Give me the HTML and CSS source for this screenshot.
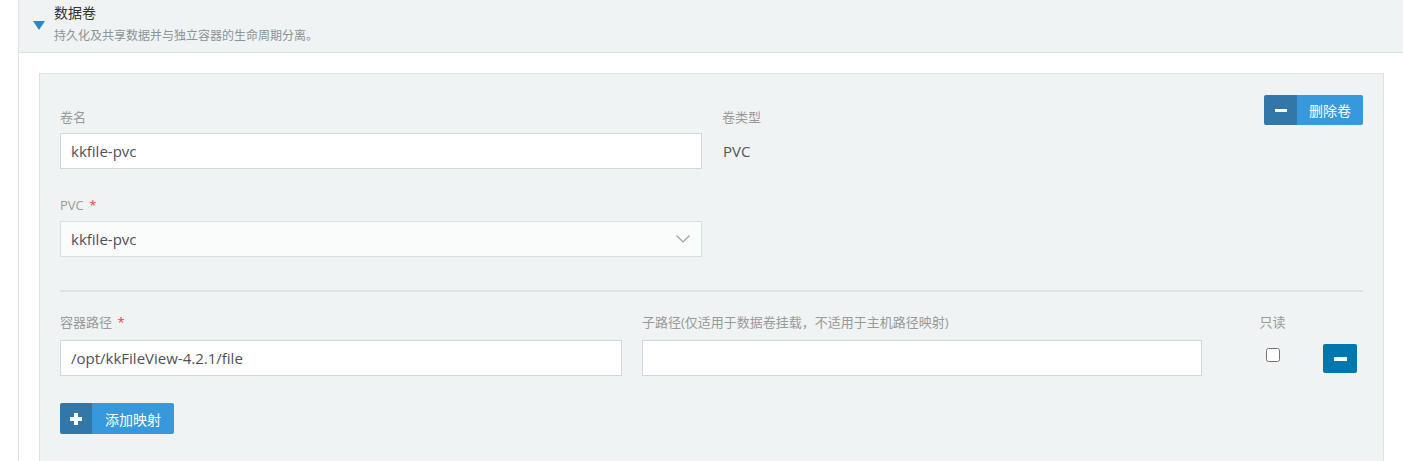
FILE: index.html
```html
<!DOCTYPE html>
<html lang="zh-CN">

<head>
    <meta charset="UTF-8">
    <meta name="viewport" content="width=device-width, initial-scale=1.0">
    <title>数据卷</title>
    <link rel="stylesheet" href="styles.css">
</head>

<body>
    <div class="section">
        <div class="section-head">
            <span class="caret"></span>
            <div>
                <div class="section-title">数据卷</div>
                <div class="section-desc">持久化及共享数据并与独立容器的生命周期分离。</div>
            </div>
        </div>

        <div class="section-body">
            <div class="volume">
                <div class="volume-top">
                    <div class="volume-fields">
                        <div class="field">
                            <label class="label">卷名</label>
                            <input class="input" type="text" value="kkfile-pvc">
                        </div>
                        <div class="field field-next">
                            <label class="label">PVC <span class="req">*</span></label>
                            <div class="select">
                                <span>kkfile-pvc</span>
                                <svg width="14" height="8" viewBox="0 0 14 8">
                                    <path d="M0.5 0.5 L7 7 L13.5 0.5" fill="none" stroke="#9aa3a8" stroke-width="1.2" />
                                </svg>
                            </div>
                        </div>
                    </div>
                    <div class="field">
                        <label class="label">卷类型</label>
                        <div class="value">PVC</div>
                    </div>
                    <button class="btn btn-split">
                        <span class="btn-icon"><span class="bar"></span></span>
                        <span class="btn-text">删除卷</span>
                    </button>
                </div>

                <div class="divider"></div>

                <div class="mount-row">
                    <div>
                        <label class="label label-wide">容器路径 <span class="req">*</span></label>
                        <input class="input" type="text" value="/opt/kkFileView-4.2.1/file">
                    </div>
                    <div>
                        <label class="label label-wide">子路径(仅适用于数据卷挂载，不适用于主机路径映射)</label>
                        <input class="input" type="text" value="">
                    </div>
                    <div class="readonly">
                        <label class="label label-wide">只读</label>
                        <input class="check" type="checkbox">
                    </div>
                    <div class="remove">
                        <button class="btn-remove"><span class="bar"></span></button>
                    </div>
                </div>

                <button class="btn btn-split btn-add">
                    <span class="btn-icon"><span class="plus"></span></span>
                    <span class="btn-text">添加映射</span>
                </button>
            </div>
        </div>
    </div>
</body>

</html>
```

FILE: styles.css
```css
* {
    box-sizing: border-box;
}

body {
    font-family: "Open Sans", "Noto Sans CJK SC", sans-serif;
    background-color: #ffffff;
    color: #555;
    margin: 0;
}

.section {
    margin-left: 18px;
    border-left: 1px solid #dde3e4;
    min-height: 461px;
}

.section-head {
    display: flex;
    align-items: flex-start;
    background-color: #eff3f4;
    border-bottom: 1px solid #d9e1e2;
    height: 53px;
    padding: 4px 0 0 14px;
}

.caret {
    width: 0;
    height: 0;
    margin: 17px 9px 0 0;
    border-left: 6px solid transparent;
    border-right: 6px solid transparent;
    border-top: 9px solid #2c87ca;
}

.section-title {
    font-size: 14px;
    line-height: 18px;
    color: #333;
}

.section-desc {
    font-size: 12px;
    line-height: 18px;
    margin-top: 5px;
    color: #8b9298;
}

.section-body {
    padding: 20px 19px 0 20px;
}

.volume {
    background-color: #f0f3f4;
    border: 1px solid #dce3e4;
    padding: 21px 20px 40px;
}

.volume-top {
    display: grid;
    grid-template-columns: 642px 1fr auto;
    column-gap: 20px;
    align-items: start;
}

.field {
    padding-top: 13px;
}

.field-next {
    padding-top: 27px;
}

.label {
    display: block;
    font-size: 13px;
    line-height: 18px;
    color: #999;
    margin-bottom: 7px;
}

.label-wide {
    margin-bottom: 9px;
}

.req {
    color: #e2454a;
    margin-left: 2px;
}

.input {
    display: block;
    width: 100%;
    height: 36px;
    border: 1px solid #cfd9db;
    background-color: #fff;
    padding: 0 10px;
    font-family: inherit;
    font-size: 15px;
    color: #4f4f57;
    outline: none;
}

.select {
    display: flex;
    align-items: center;
    justify-content: space-between;
    height: 36px;
    border: 1px solid #d6dfe1;
    background-color: #fafbfb;
    padding: 0 11px 0 10px;
    font-size: 15px;
    color: #4f4f57;
}

.value {
    font-size: 15px;
    line-height: 36px;
    color: #555;
    padding-left: 1px;
}

.btn {
    border: none;
    padding: 0;
    cursor: pointer;
    font-family: inherit;
}

.btn-split {
    display: inline-flex;
    height: 30px;
    border-radius: 2px;
    overflow: hidden;
    color: #fff;
    font-size: 14px;
}

.btn-icon {
    display: flex;
    align-items: center;
    justify-content: center;
    width: 33px;
    background-color: #3277a8;
}

.btn-text {
    display: flex;
    align-items: center;
    padding: 0 12px;
    background-color: #3799dc;
}

.bar {
    display: block;
    width: 12px;
    height: 3px;
    background-color: #fff;
}

.plus {
    position: relative;
    display: block;
    width: 12px;
    height: 12px;
}

.plus::before,
.plus::after {
    content: "";
    position: absolute;
    background-color: #fff;
}

.plus::before {
    left: 0;
    top: 4px;
    width: 12px;
    height: 4px;
}

.plus::after {
    left: 4px;
    top: 0;
    width: 4px;
    height: 12px;
}

.divider {
    border-top: 2px solid #dde3e3;
    margin: 33px 0 21px;
}

.mount-row {
    display: grid;
    grid-template-columns: 562px 1fr 81px 40px;
    column-gap: 20px;
}

.readonly {
    padding-left: 20px;
    text-align: center;
}

.check {
    width: 14px;
    height: 14px;
    margin: 8px 0 0;
}

.remove {
    padding-top: 31px;
}

.btn-remove {
    display: flex;
    align-items: center;
    justify-content: center;
    width: 34px;
    height: 29px;
    border: none;
    border-radius: 2px;
    background-color: #0078ad;
    cursor: pointer;
}

.btn-remove .bar {
    width: 13px;
    height: 4px;
}

.btn-add {
    margin-top: 27px;
    height: 31px;
}

.btn-add .btn-icon {
    width: 32px;
}

.btn-add .btn-text {
    padding: 0 13px;
}
```
